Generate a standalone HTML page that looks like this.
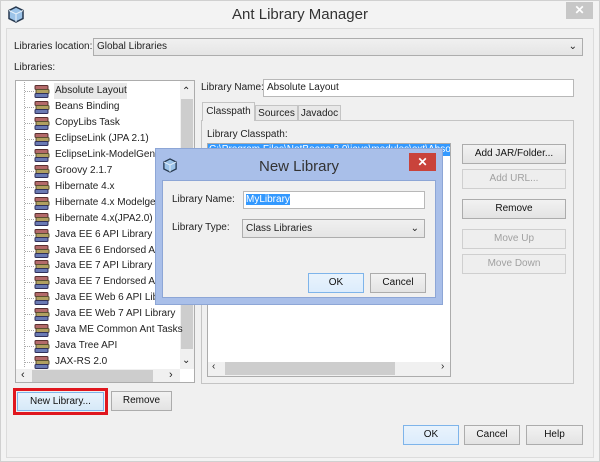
<!DOCTYPE html>
<html><head><meta charset="utf-8"><style>
*{box-sizing:border-box;margin:0;padding:0}
body{width:600px;height:462px;background:#f3f3f3;font-family:"Liberation Sans",Arial,sans-serif;font-size:10px;color:#222;position:relative;overflow:hidden}
.a{position:absolute;white-space:nowrap}
.btn{position:absolute;background:linear-gradient(#f2f2f2,#e3e3e3);border:1px solid #acacac;text-align:center;line-height:17px;font-size:10px;color:#111}
.dis{color:#a0a0a0;border-color:#cfcfcf;background:#eeeeee}
.fld{position:absolute;background:#fff;border:1px solid #b8b8b8;padding-left:3px;line-height:15px}
.it{position:absolute;left:55px;height:15px;line-height:15px;white-space:nowrap}
.ic{position:absolute;left:34px;width:16px;height:13px}
</style></head><body>
<div class="a" style="left:0;top:0;width:600px;height:462px;border:1px solid #d0d0d0;background:#f3f3f3"></div>
<svg class="a" style="left:8px;top:6px" width="16" height="17" viewBox="0 0 16 17"><path d="M8 1 L15 4.5 L15 12.5 L8 16 L1 12.5 L1 4.5 Z" fill="#9cc3e8" stroke="#26384f" stroke-width="1.5"/><path d="M1 4.5 L8 8 L15 4.5 M8 8 L8 16" fill="none" stroke="#e8f2fb" stroke-width="1"/></svg>
<div class="a" style="left:0;width:600px;top:6px;text-align:center;font-size:15px;color:#333">Ant Library Manager</div>
<div class="a" style="left:566px;top:2px;width:27px;height:17px;background:#c7c7c7;color:#fff;text-align:center;font-size:12px;line-height:17px;font-weight:bold">✕</div>
<div class="a" style="left:6px;top:28px;width:588px;height:430px;background:#f0f0f0;border:1px solid #dcdcdc"></div>

<div class="a" style="left:14px;top:41px">Libraries location:</div>
<div class="a" style="left:93px;top:38px;width:490px;height:18px;border:1px solid #adadad;background:linear-gradient(#f0f0f0,#e5e5e5);padding-left:3px;line-height:16px">Global Libraries<span class="a" style="right:5px;top:0">⌄</span></div>
<div class="a" style="left:14px;top:62px">Libraries:</div>

<div class="a" style="left:15px;top:80px;width:180px;height:303px;background:#fff;border:1px solid #acacac"></div>
<div class="a" style="left:180px;top:81px;width:14px;height:288px;background:#f0f0f0"></div>
<div class="a" style="left:181px;top:99px;width:12px;height:250px;background:#cdcdcd"></div>
<div class="a" style="left:182px;top:86px;font-size:10px">⌃</div>
<div class="a" style="left:182px;top:355px;font-size:10px">⌄</div>
<div class="a" style="left:16px;top:369px;width:164px;height:13px;background:#f0f0f0"></div>
<div class="a" style="left:32px;top:370px;width:121px;height:12px;background:#cdcdcd"></div>
<div class="a" style="left:21px;top:369px;font-size:11px">‹</div>
<div class="a" style="left:169px;top:369px;font-size:11px">›</div>
<div class="a" style="left:24px;top:82px;height:285px;border-left:1px dotted #aaa"></div>
<div class="a" style="left:54px;top:83px;width:73px;height:16px;background:#e8e8e8"></div>
<div id="items"></div>

<div class="a" style="left:201px;top:82px">Library Name:</div>
<div class="fld" style="left:263px;top:79px;width:311px;height:18px">Absolute Layout</div>

<div class="a" style="left:201px;top:120px;width:373px;height:264px;border:1px solid #c4c4c4;background:#f0f0f0"></div>
<div class="a" style="left:202px;top:102px;width:53px;height:19px;border:1px solid #c4c4c4;border-bottom:none;background:#f0f0f0;text-align:center;line-height:18px">Classpath</div>
<div class="a" style="left:255px;top:105px;width:43px;height:15px;border:1px solid #c4c4c4;border-bottom:none;background:#e8e8e8;text-align:center;line-height:15px">Sources</div>
<div class="a" style="left:298px;top:105px;width:43px;height:15px;border:1px solid #c4c4c4;border-bottom:none;background:#e8e8e8;text-align:center;line-height:15px">Javadoc</div>
<div class="a" style="left:207px;top:129px">Library Classpath:</div>
<div class="a" style="left:207px;top:143px;width:244px;height:234px;background:#fff;border:1px solid #acacac"></div>
<div class="a" style="left:208px;top:144px;width:242px;height:12px;background:#3399ff;color:#fff;line-height:12px;overflow:hidden;white-space:nowrap;padding-left:1px">C:\Program Files\NetBeans 8.0\java\modules\ext\Absolu</div>
<div class="a" style="left:208px;top:362px;width:242px;height:14px;background:#f0f0f0"></div>
<div class="a" style="left:225px;top:362px;width:170px;height:13px;background:#cdcdcd"></div>
<div class="a" style="left:212px;top:361px">‹</div>
<div class="a" style="left:441px;top:361px">›</div>

<div class="btn" style="left:462px;top:144px;width:104px;height:20px">Add JAR/Folder...</div>
<div class="btn dis" style="left:462px;top:169px;width:104px;height:20px">Add URL...</div>
<div class="btn" style="left:462px;top:199px;width:104px;height:20px">Remove</div>
<div class="btn dis" style="left:462px;top:229px;width:104px;height:20px">Move Up</div>
<div class="btn dis" style="left:462px;top:254px;width:104px;height:20px">Move Down</div>

<div class="a" style="left:13px;top:388px;width:95px;height:27px;border:3px solid #e0161e"></div>
<div class="btn" style="left:17px;top:392px;width:87px;height:19px;background:linear-gradient(#e9f3fc,#d6e9f8);border-color:#7eb4ea">New Library...</div>
<div class="btn" style="left:111px;top:391px;width:61px;height:20px">Remove</div>

<div class="btn" style="left:403px;top:425px;width:56px;height:20px;background:linear-gradient(#e9f3fc,#dcecfc);border-color:#7eb4ea">OK</div>
<div class="btn" style="left:464px;top:425px;width:56px;height:20px">Cancel</div>
<div class="btn" style="left:526px;top:425px;width:57px;height:20px">Help</div>

<div class="a" style="left:155px;top:148px;width:288px;height:157px;background:#a9bfe9;border:1px solid #8da6d6"></div>
<svg class="a" style="left:163px;top:158px" width="14" height="15" viewBox="0 0 16 17"><path d="M8 1 L15 4.5 L15 12.5 L8 16 L1 12.5 L1 4.5 Z" fill="#9cc3e8" stroke="#26384f" stroke-width="1.5"/><path d="M1 4.5 L8 8 L15 4.5 M8 8 L8 16" fill="none" stroke="#e8f2fb" stroke-width="1"/></svg>
<div class="a" style="left:155px;width:288px;top:158px;text-align:center;font-size:15px;color:#333">New Library</div>
<div class="a" style="left:409px;top:153px;width:27px;height:18px;background:#c9433b;color:#fff;text-align:center;font-size:12px;line-height:18px;font-weight:bold">✕</div>
<div class="a" style="left:162px;top:180px;width:274px;height:118px;background:#f0f0f0;border:1px solid #8da6d6"></div>
<div class="a" style="left:172px;top:194px">Library Name:</div>
<div class="fld" style="left:243px;top:191px;width:182px;height:18px;padding-left:2px"><span style="background:#3399ff;color:#fff">MyLibrary</span></div>
<div class="a" style="left:172px;top:222px">Library Type:</div>
<div class="a" style="left:242px;top:219px;width:183px;height:19px;border:1px solid #adadad;background:linear-gradient(#f0f0f0,#e5e5e5);padding-left:3px;line-height:17px">Class Libraries<span class="a" style="right:5px;top:0">⌄</span></div>
<div class="btn" style="left:308px;top:273px;width:56px;height:20px;background:linear-gradient(#e9f3fc,#dcecfc);border-color:#7eb4ea">OK</div>
<div class="btn" style="left:370px;top:273px;width:56px;height:20px">Cancel</div>

<script>
var n=["Absolute Layout","Beans Binding","CopyLibs Task","EclipseLink (JPA 2.1)","EclipseLink-ModelGen (JPA 2","Groovy 2.1.7","Hibernate 4.x","Hibernate 4.x Modelgen","Hibernate 4.x(JPA2.0)","Java EE 6 API Library","Java EE 6 Endorsed API","Java EE 7 API Library","Java EE 7 Endorsed API","Java EE Web 6 API Library","Java EE Web 7 API Library","Java ME Common Ant Tasks","Java Tree API","JAX-RS 2.0"];
var h="";
n.forEach(function(t,i){var y=83+i*15.95;
h+='<div class="a" style="left:25px;top:'+(y+8)+'px;width:9px;border-top:1px dotted #aaa"></div>';
h+='<svg class="ic" style="top:'+(y+2)+'px" viewBox="0 0 16 13"><rect x="1" y="0.5" width="13" height="4" rx="1" fill="#b46a6a" stroke="#5a3030"/><rect x="2" y="4.5" width="13" height="4" rx="1" fill="#b0a060" stroke="#5a5030"/><rect x="1" y="8.5" width="13" height="4" rx="1" fill="#6a7ab4" stroke="#30305a"/></svg>';
h+='<div class="it" style="top:'+(y)+'px;width:'+(i==4||i==7||i==10||i==12||i==13?125:150)+'px;overflow:hidden">'+t+'</div>';});
document.getElementById("items").innerHTML=h;
</script>
</body></html>
